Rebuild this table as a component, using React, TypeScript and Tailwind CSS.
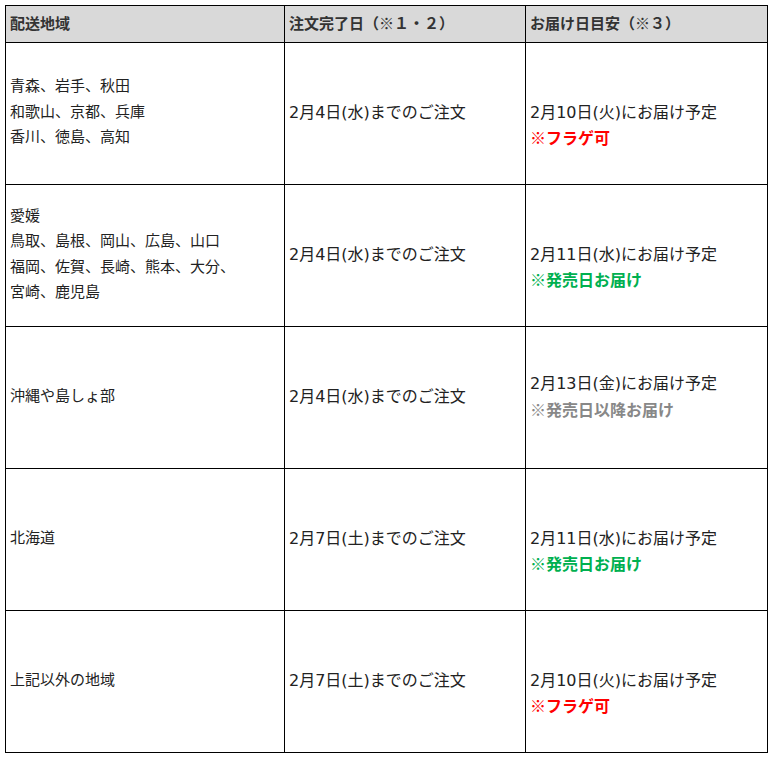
type Note = { text: string; tone: 'red' | 'green' | 'gray' };

interface Row {
  areas: string[];
  order: string;
  delivery: string;
  note: Note;
  // 1行目を注文日と同じ高さに揃える
  alignFirst: boolean;
}

const rows: Row[] = [
  {
    areas: ['青森、岩手、秋田', '和歌山、京都、兵庫', '香川、徳島、高知'],
    order: '2月4日(水)までのご注文',
    delivery: '2月10日(火)にお届け予定',
    note: { text: '※フラゲ可', tone: 'red' },
    alignFirst: true,
  },
  {
    areas: ['愛媛', '鳥取、島根、岡山、広島、山口', '福岡、佐賀、長崎、熊本、大分、', '宮崎、鹿児島'],
    order: '2月4日(水)までのご注文',
    delivery: '2月11日(水)にお届け予定',
    note: { text: '※発売日お届け', tone: 'green' },
    alignFirst: true,
  },
  {
    areas: ['沖縄や島しょ部'],
    order: '2月4日(水)までのご注文',
    delivery: '2月13日(金)にお届け予定',
    note: { text: '※発売日以降お届け', tone: 'gray' },
    alignFirst: false,
  },
  {
    areas: ['北海道'],
    order: '2月7日(土)までのご注文',
    delivery: '2月11日(水)にお届け予定',
    note: { text: '※発売日お届け', tone: 'green' },
    alignFirst: true,
  },
  {
    areas: ['上記以外の地域'],
    order: '2月7日(土)までのご注文',
    delivery: '2月10日(火)にお届け予定',
    note: { text: '※フラゲ可', tone: 'red' },
    alignFirst: true,
  },
];

const toneClass = {
  red: 'text-[#ff0000]',
  green: 'text-[#00b050]',
  gray: 'text-[#888888]',
};

// 数字・括弧は幅広の欧文フォントで表示
const dateFont = { fontFamily: '"DejaVu Sans", "Noto Sans CJK JP", sans-serif' };

export default function App() {
  return (
    <div
      className="min-h-screen bg-white pl-[5px] pt-[5px] text-[15px] leading-[25.4px] text-[#222]"
      style={{ fontFamily: '"Noto Sans CJK JP", "Noto Sans", sans-serif' }}
    >
      <table className="w-[762px] table-fixed border-collapse">
        <colgroup>
          <col className="w-[279px]" />
          <col className="w-[241px]" />
          <col className="w-[242px]" />
        </colgroup>
        <thead>
          <tr className="h-[37px] bg-[#d9d9d9]">
            <th className="border border-black px-[4px] pb-[2px] text-left align-middle font-bold text-[#333]">配送地域</th>
            <th className="border border-black px-[4px] pb-[2px] text-left align-middle font-bold text-[#333]">注文完了日（※１・２）</th>
            <th className="border border-black px-[4px] pb-[2px] text-left align-middle font-bold text-[#333]">お届け日目安（※３）</th>
          </tr>
        </thead>
        <tbody>
          {rows.map((row, index) => (
            <tr key={index} className="h-[142px]">
              <td className="border border-black px-[4px] pb-[6px] align-middle">
                {row.areas.map((area, i) => (
                  <div key={i}>{area}</div>
                ))}
              </td>
              <td className="border border-black px-[4px] pb-[2px] align-middle text-[16px] leading-[25.6px]">
                <span style={dateFont}>{row.order}</span>
              </td>
              <td className="border border-black px-[4px] pb-[2px] align-middle text-[16px] leading-[25.6px]">
                {row.alignFirst && <div className="invisible">&nbsp;</div>}
                <div style={dateFont}>{row.delivery}</div>
                <div className={`font-bold ${toneClass[row.note.tone]}`}>{row.note.text}</div>
              </td>
            </tr>
          ))}
        </tbody>
      </table>
    </div>
  );
}
